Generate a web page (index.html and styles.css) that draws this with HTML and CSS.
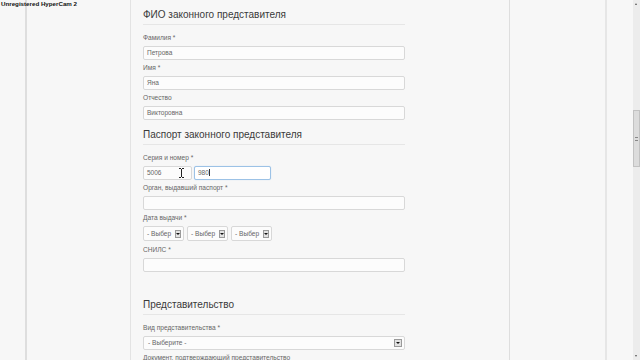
FILE: index.html
```html
<!DOCTYPE html>
<html lang="ru">
<head>
<meta charset="utf-8">
<title>Форма</title>
<link rel="stylesheet" href="styles.css">
</head>
<body>
<div class="hypercam">Unregistered HyperCam 2</div>
<div class="page">
  <div class="gutter"></div>
  <div class="side"></div>
  <main class="main">
    <section class="sect">
      <h2 class="sect-title">ФИО законного представителя</h2>
      <div class="field">
        <div class="lbl">Фамилия *</div>
        <div class="inp">Петрова</div>
      </div>
      <div class="field">
        <div class="lbl">Имя *</div>
        <div class="inp">Яна</div>
      </div>
      <div class="field">
        <div class="lbl">Отчество</div>
        <div class="inp">Викторовна</div>
      </div>
    </section>
    <section class="sect">
      <h2 class="sect-title">Паспорт законного представителя</h2>
      <div class="field">
        <div class="lbl">Серия и номер *</div>
        <div class="row">
          <div class="inp inp-series">5006
            <svg class="ibeam" width="7" height="10" viewBox="0 0 7 10"><path d="M1 0.5h2M4 0.5h2M3.5 1v8M1 9.5h2M4 9.5h2" stroke="#222" stroke-width="1" fill="none"/></svg>
          </div>
          <div class="inp inp-number inp-focus">980<span class="caret"></span></div>
        </div>
      </div>
      <div class="field">
        <div class="lbl">Орган, выдавший паспорт *</div>
        <div class="inp"></div>
      </div>
      <div class="field field-date">
        <div class="lbl">Дата выдачи *</div>
        <div class="row row-date">
          <div class="sel sel-small"><span class="sel-text">- Выбер</span><span class="sel-btn"></span></div>
          <div class="sel sel-small"><span class="sel-text">- Выбер</span><span class="sel-btn"></span></div>
          <div class="sel sel-small"><span class="sel-text">- Выбер</span><span class="sel-btn"></span></div>
        </div>
      </div>
      <div class="field">
        <div class="lbl">СНИЛС *</div>
        <div class="inp"></div>
      </div>
    </section>
    <section class="sect sect-gap">
      <h2 class="sect-title">Представительство</h2>
      <div class="field">
        <div class="lbl">Вид представительства *</div>
        <div class="sel"><span class="sel-text">- Выберите -</span><span class="sel-btn"></span></div>
      </div>
      <div class="field">
        <div class="lbl">Документ, подтверждающий представительство</div>
      </div>
    </section>
  </main>
  <div class="aside"></div>
  <div class="spacer"></div>
  <div class="scroll">
    <span class="arrow arrow-up"></span>
    <div class="track">
      <div class="thumb"><span class="grip"></span></div>
    </div>
    <span class="arrow arrow-down"></span>
  </div>
</div>
</body>
</html>
```

FILE: styles.css
```css
* { box-sizing: border-box; }
html, body {
  margin: 0;
  padding: 0;
  width: 640px;
  height: 360px;
  overflow: hidden;
  background: #f7f7f7;
  font-family: "Liberation Sans", Arial, sans-serif;
}

.hypercam {
  position: absolute;
  left: 1px;
  top: 0;
  font-size: 6.2px;
  line-height: 8px;
  font-weight: bold;
  color: #111;
  z-index: 5;
}

.page {
  display: flex;
  height: 360px;
}
.gutter { width: 25px; flex: none; }
.side {
  width: 106px;
  flex: none;
  border-left: 2px solid #dedede;
  border-right: 1px solid #e3e3e3;
}
.main {
  width: 379px;
  flex: none;
  padding: 4px 0 0 12px;
  border-right: 1px solid #dedede;
  overflow: hidden;
}
.aside {
  width: 97px;
  flex: none;
  border-right: 2px solid #e6e6e6;
}
.spacer { flex: 1; }

.sect { width: 262px; display: flow-root; }
.sect-gap { margin-top: 18px; }
.sect-title {
  margin: 5px 0 9px;
  padding: 0 0 3px;
  font-size: 10px;
  line-height: 12px;
  font-weight: normal;
  color: #3a3a3a;
  border-bottom: 1px solid #e6e6e6;
}

.field { margin-bottom: 4px; }
.field-date { margin-bottom: 5px; }
.lbl {
  font-size: 6.6px;
  line-height: 8px;
  color: #666;
  margin-bottom: 4px;
  white-space: nowrap;
}
.inp {
  position: relative;
  height: 14px;
  border: 1px solid #d8d8d8;
  border-radius: 2px;
  background: #fcfcfc;
  padding: 0 3px;
  font-size: 6.5px;
  line-height: 12px;
  color: #666;
}
.row { display: flex; gap: 2px; }
.row-date { gap: 3px; }
.inp-series { width: 49px; }
.inp-number { width: 77px; }
.inp-focus {
  border-color: #9cc2e6;
  box-shadow: 0 0 1px #b8d4ef;
  background: #fff;
}
.caret {
  display: inline-block;
  width: 1px;
  height: 7px;
  background: #333;
  vertical-align: -1px;
}
.ibeam {
  position: absolute;
  left: 34px;
  top: 1px;
}

.sel {
  display: flex;
  align-items: center;
  height: 14px;
  border: 1px solid #d8d8d8;
  border-radius: 2px;
  background: #fcfcfc;
  padding: 0 2px 0 4px;
  font-size: 6.6px;
  color: #666;
}
.sel-small { width: 41px; height: 15px; padding-left: 3px; }
.sel-text {
  flex: 1;
  white-space: nowrap;
  line-height: 12px;
}
.sel-btn {
  position: relative;
  flex: none;
  width: 8px;
  height: 8px;
  margin-left: 1px;
  border: 1px solid #9a9a9a;
  background: #e2e2e2;
}
.sel-small .sel-btn { width: 6px; height: 8px; }
.sel-btn::after {
  content: "";
  position: absolute;
  left: 50%;
  top: 50%;
  margin: -1px 0 0 -2px;
  border-left: 2px solid transparent;
  border-right: 2px solid transparent;
  border-top: 2px solid #111;
}

.scroll {
  width: 7px;
  flex: none;
  display: flex;
  flex-direction: column;
  background: #ececec;
}
.arrow {
  height: 8px;
  position: relative;
  flex: none;
}
.arrow::after {
  content: "";
  position: absolute;
  left: 2px;
  top: 3px;
  border-left: 1.5px solid transparent;
  border-right: 1.5px solid transparent;
}
.arrow-up::after { border-bottom: 2px solid #555; }
.arrow-down::after { border-top: 2px solid #555; }
.track { flex: 1; padding-top: 102px; }
.thumb {
  height: 57px;
  border: 1px solid #c2c2c2;
  background: #dcdcdc;
  display: flex;
  align-items: center;
  justify-content: center;
}
.grip {
  width: 3px;
  height: 4px;
  border-top: 1px solid #888;
  border-bottom: 1px solid #888;
}
```
